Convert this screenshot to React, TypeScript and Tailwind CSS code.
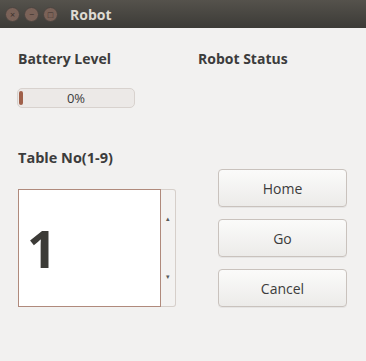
import React from "react";

function WinButton({ children }: { children: React.ReactNode }) {
    return (
        <span className="size-[15px] rounded-full bg-[#7a6258] border border-[#4a4440] inline-flex items-center justify-center text-[9px] leading-none text-[#3a302c]">
            {children}
        </span>
    );
}

function PushButton({ label }: { label: string }) {
    return (
        <button className="h-[38px] w-[129px] rounded-[4px] border border-[#c9c2bd] bg-gradient-to-b from-[#fbfbfa] to-[#ecebe9] text-[14px] text-[#3c3c3c] shadow-[0_1px_0_rgba(0,0,0,0.05)]">
            {label}
        </button>
    );
}

export default function App() {
    return (
        <div className="w-[366px] h-[361px] bg-[#f2f1f0] font-['Open_Sans',sans-serif] text-[#3c3c3c] flex flex-col">
            {/* title bar */}
            <div className="h-[28px] bg-gradient-to-b from-[#55524c] to-[#3c3b37] flex items-center pl-[5px] gap-[4px]">
                <WinButton>×</WinButton>
                <WinButton>−</WinButton>
                <WinButton>□</WinButton>
                <span className="ml-[8px] text-[14px] font-bold text-[#dfdbd2]">Robot</span>
            </div>

            <div className="flex flex-col pl-[18px] pt-[20px]">
                <div className="flex text-[14px] font-bold">
                    <span className="w-[180px]">Battery Level</span>
                    <span>Robot Status</span>
                </div>

                <div className="mt-[19px] w-[118px] h-[20px] -ml-px rounded-[5px] border border-[#d8d2ce] bg-[#ece9e7] flex items-center relative">
                    <span className="absolute left-[1px] top-[2px] h-[14px] w-[4px] rounded-[2px] bg-[#a0604a]" />
                    <span className="flex-1 text-center text-[13px] leading-none">0%</span>
                </div>

                <div className="mt-[40px] flex">
                    <div className="flex flex-col">
                        <span className="text-[14.5px] font-bold leading-[20px]">Table No(1-9)</span>
                        <div className="mt-[21px] flex h-[118px] w-[158px]">
                            <div className="flex-1 bg-white border border-[#b08a7c] flex items-center pl-[8px]">
                                <span className="text-[52px] font-bold leading-none text-[#3c3b37]">1</span>
                            </div>
                            <div className="w-[15px] border border-l-0 border-[#d6cfca] bg-[#f3f2f1] rounded-r-[3px] flex flex-col items-center justify-around text-[7px] text-[#5a5a5a]">
                                <span>▴</span>
                                <span>▾</span>
                            </div>
                        </div>
                    </div>
                    <div className="ml-[42px] flex flex-col gap-[12px] pt-[21px]">
                        <PushButton label="Home" />
                        <PushButton label="Go" />
                        <PushButton label="Cancel" />
                    </div>
                </div>
            </div>
        </div>
    );
}
